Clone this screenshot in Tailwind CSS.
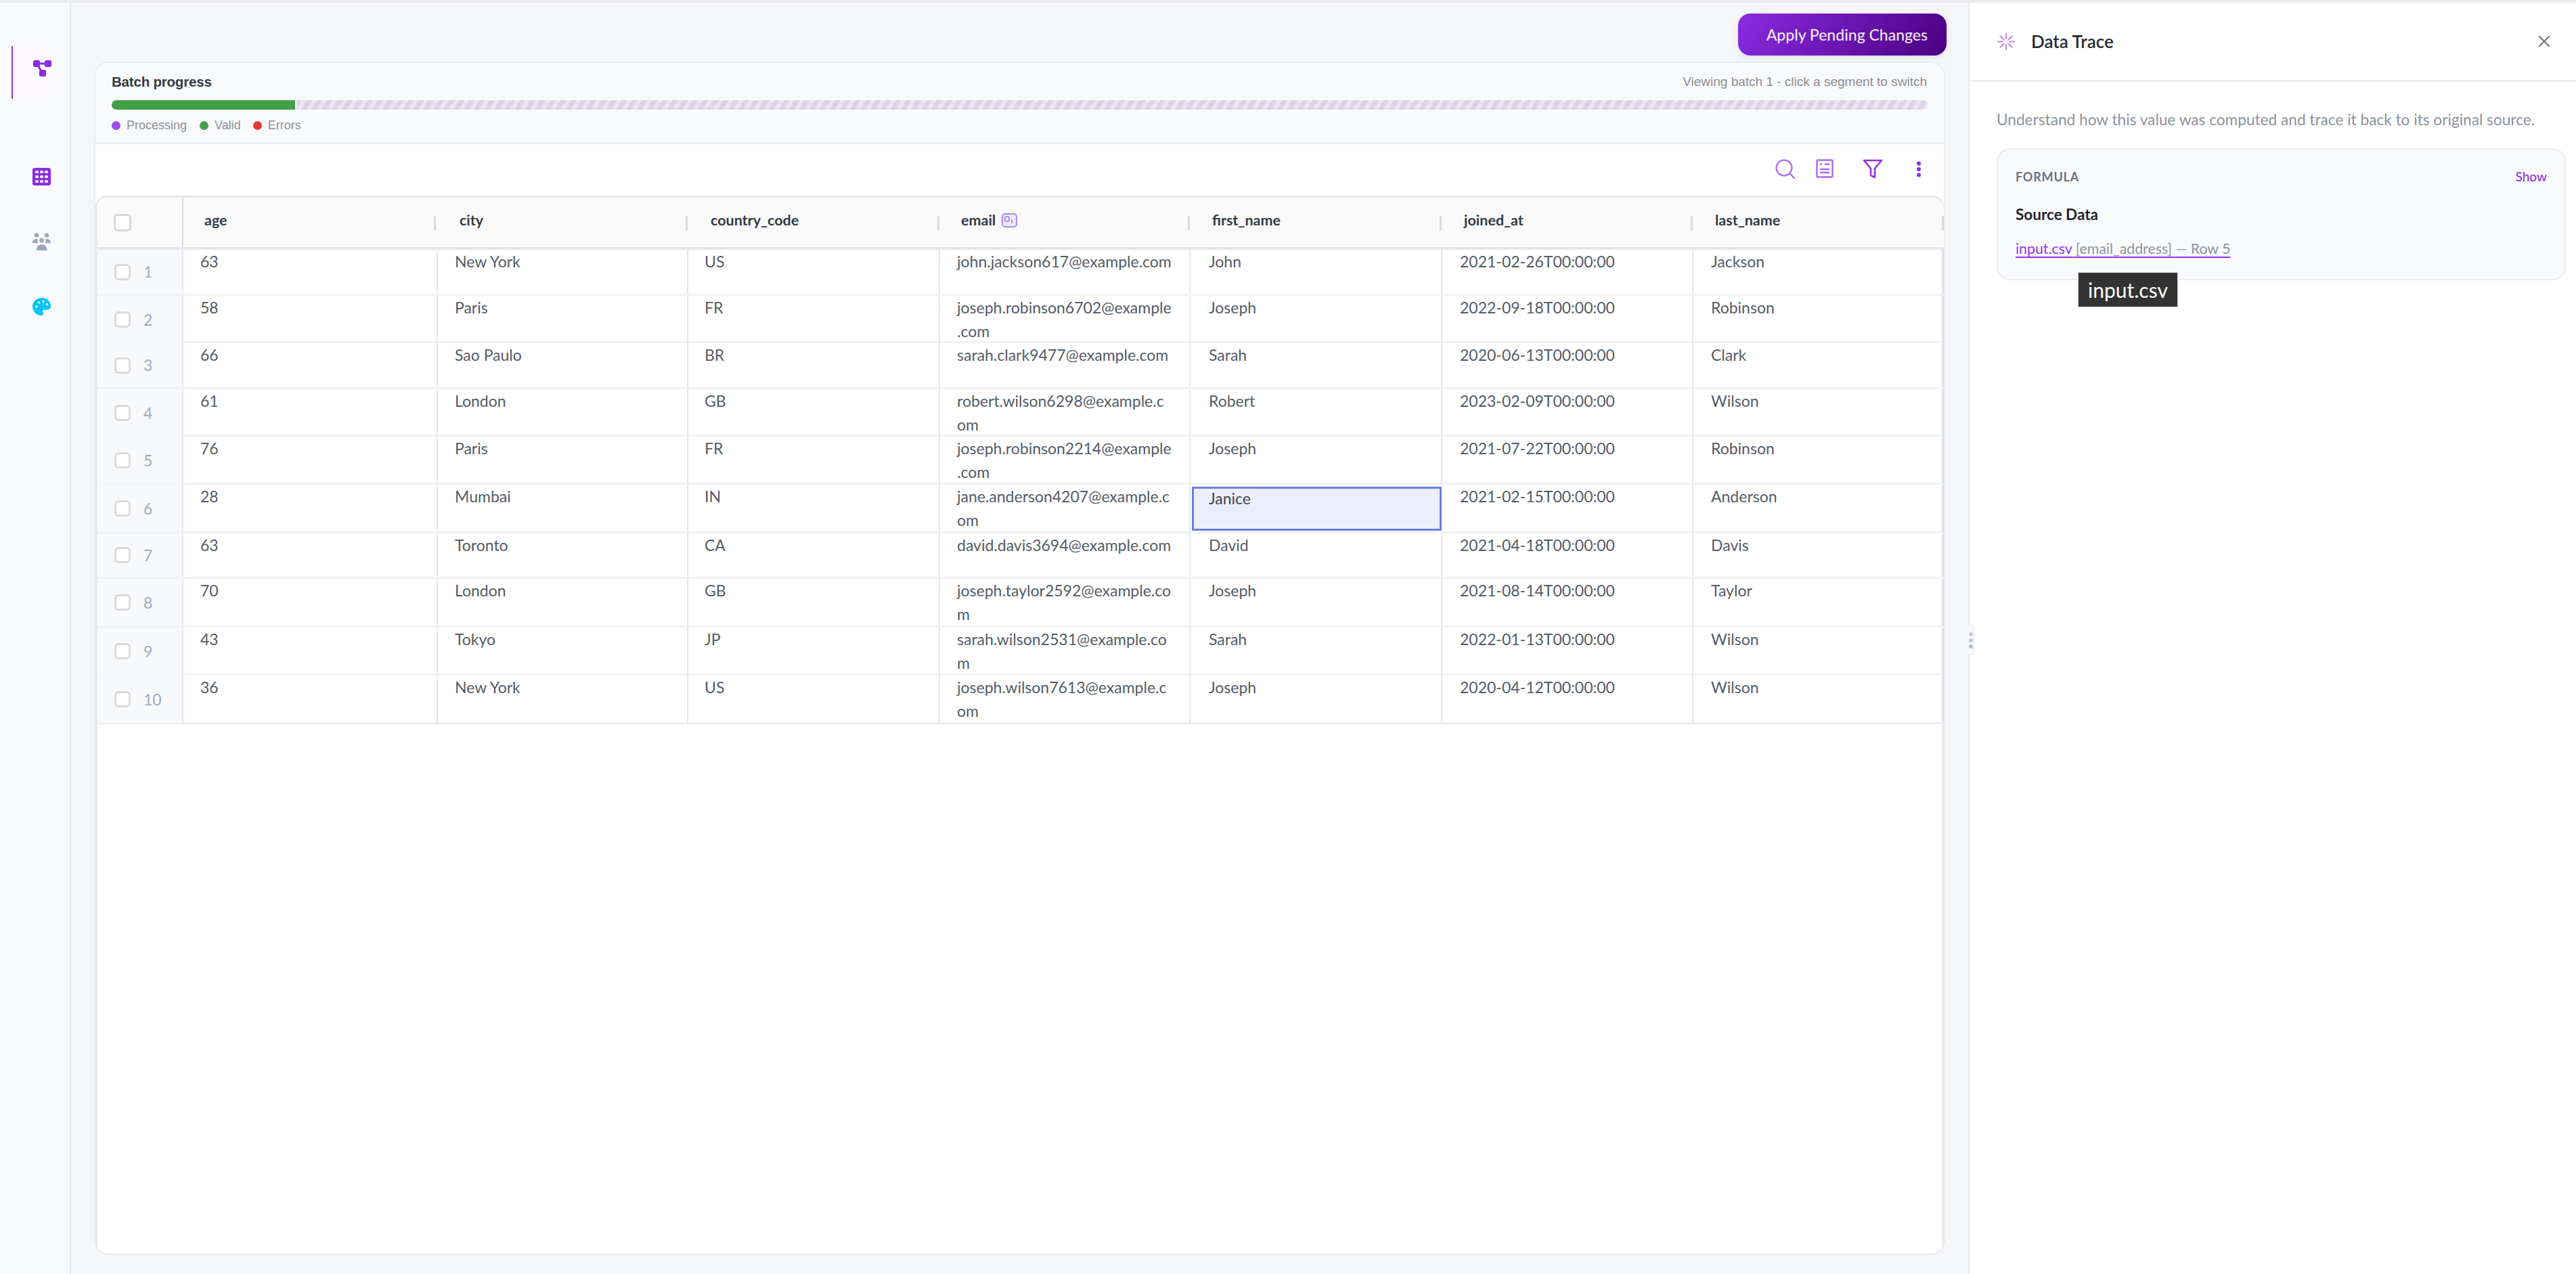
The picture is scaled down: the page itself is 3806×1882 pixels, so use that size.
<!DOCTYPE html>
<html lang="en">
<head>
<meta charset="utf-8">
<title>Data Trace</title>
<script src="https://cdn.jsdelivr.net/npm/@tailwindcss/browser@4"></script>
</head>
<body class="font-['Lato','Noto_Sans',sans-serif] text-[#555b66]">
<div class="flex h-[1882px] w-[3806px] flex-col overflow-hidden bg-[#f5f6f8]">
  <div class="h-[4px] shrink-0 bg-[#e9ebef]"></div>
  <div class="flex min-h-0 flex-1">

    <!-- Sidebar -->
    <aside class="flex w-[105px] shrink-0 flex-col border-r-2 border-[#e9ebef] bg-[#f9fafc] pt-[64px] pl-[17px]">
      <div class="flex h-[78px] w-[58px] items-center justify-end rounded-r-[20px] border-l-2 border-[#9333ea] bg-[#fbf9fe]">
        <svg class="mr-[-1px] mb-[12px] h-[24px] w-[27px] text-[#8a2be2]" viewBox="0 0 27 24" fill="none" stroke="currentColor">
          <g fill="currentColor" stroke="none">
            <rect x="0" y="0" width="10" height="10" rx="2.500"/><rect x="17" y="0" width="10" height="10" rx="2.500"/><rect x="9" y="14" width="10" height="10" rx="2.500"/>
          </g>
          <path d="M5 5h17M5 5l9 14" stroke-width="3"/>
        </svg>
      </div>
      <div class="mt-[102px] ml-[31px] flex flex-col gap-[70px]">
        <svg class="h-[26px] w-[27px] text-[#8a2be2]" viewBox="0 0 27 26">
          <rect width="27" height="26" rx="3.500" fill="currentColor"/>
          <g fill="#f3ecfc"><rect x="4" y="4" width="5" height="4" rx="1.500"/><rect x="11" y="4" width="5" height="4" rx="1.500"/><rect x="18" y="4" width="5" height="4" rx="1.500"/><rect x="4" y="11" width="5" height="4" rx="1.500"/><rect x="11" y="11" width="5" height="4" rx="1.500"/><rect x="18" y="11" width="5" height="4" rx="1.500"/><rect x="4" y="18" width="5" height="4" rx="1.500"/><rect x="11" y="18" width="5" height="4" rx="1.500"/><rect x="18" y="18" width="5" height="4" rx="1.500"/></g>
        </svg>
        <svg class="h-[26px] w-[27px] text-[#9aa8bc]" viewBox="0 0 27 26" fill="currentColor">
          <circle cx="6" cy="3.500" r="3.200"/><circle cx="21" cy="3.500" r="3.200"/><circle cx="13.500" cy="11" r="3.500"/>
          <path d="M0 15c0-4 2-6 5.500-6 1.200 0 2 .3 2.600.7-.6 1-.9 2-.7 3.300.1.800.5 1.500 1 2H0zM27 15c0-4-2-6-5.500-6-1.200 0-2 .3-2.600.7.600 1 .9 2 .7 3.300-.1.800-.5 1.500-1 2H27zM5.500 26c0-5.500 3-9 8-9s8 3.500 8 9H5.500z"/>
        </svg>
        <svg class="h-[26px] w-[27px] text-[#06c5f7]" viewBox="0 0 27 26">
          <path fill="currentColor" d="M14 0C6 0 0 6 0 13s6 13 13 13c2 0 3-1.200 3-2.800 0-.8-.3-1.500-.8-2.100-.5-.6-.6-1.500-.2-2.200.4-.8 1-1.200 2-1.200h3.500c4 0 6.500-2.500 6.500-5.700C27 5.500 21 0 14 0z"/>
          <g fill="#d9f6fe"><circle cx="6" cy="13" r="1.800"/><circle cx="9.500" cy="7" r="1.800"/><circle cx="16" cy="5.500" r="1.800"/><circle cx="21.500" cy="9.500" r="1.800"/></g>
        </svg>
      </div>
    </aside>

    <!-- Main -->
    <main class="relative min-w-0 flex-1 px-[34px] pt-[16px]">
      <div class="flex h-[62px] justify-end">
        <button class="mr-[-2px] flex h-[62px] w-[308px] items-center justify-end rounded-[18px] bg-linear-[120deg,#8a2be2,#4b0082] pr-[28px] text-[23px] font-medium text-white/90 shadow-[0_2px_8px_rgba(0,0,0,0.10)]">Apply Pending Changes</button>
      </div>

      <section class="mt-[9px] flex h-[1763px] flex-col overflow-hidden rounded-[22px] border-2 border-[#e9ebef] bg-white">
        <div class="h-[120px] shrink-0 border-b-[3px] border-[#eceef2] bg-[#f9fafc] px-[24px] font-['Liberation_Sans',sans-serif]">
          <div class="flex h-[55px] items-start justify-between pt-[15px]">
            <span class="text-[20.500px] leading-[26px] font-bold tracking-[-0.2px] text-[#333a45]">Batch progress</span>
            <span class="pr-[1px] text-[19px] leading-[26px] text-[#8b8d92]">Viewing batch 1 - click a segment to switch</span>
          </div>
          <div class="flex h-[14px] gap-[2px] overflow-hidden rounded-full">
            <div class="w-[271px] bg-[#43a047]"></div>
            <div class="flex-1 bg-[repeating-linear-gradient(120deg,#dcd3e9_0,#dcd3e9_7px,#ebe6f2_7px,#ebe6f2_13px)]"></div>
          </div>
          <div class="mt-[11px] flex items-center text-[18px] leading-[24px] text-[#8b8f98]">
            <span class="h-[13px] w-[13px] rounded-full bg-[#9a4be6]"></span><span class="ml-[9px]">Processing</span>
            <span class="ml-[19px] h-[13px] w-[13px] rounded-full bg-[#43a047]"></span><span class="ml-[9px]">Valid</span>
            <span class="ml-[18px] h-[13px] w-[13px] rounded-full bg-[#e53935]"></span><span class="ml-[9px]">Errors</span>
          </div>
        </div>

        <div class="relative h-[76px] shrink-0">
          <svg class="absolute left-[2482px] top-[22px] h-[29px] w-[30px] text-[#b07cee]" viewBox="0 0 30 29" fill="none" stroke="currentColor" stroke-width="2.600"><circle cx="13" cy="13" r="11.500"/><path d="M22 22l6 6" stroke-linecap="round"/></svg>
          <svg class="absolute left-[2542px] top-[22px] h-[28px] w-[26px] text-[#a968ee]" viewBox="0 0 26 28" fill="none" stroke="currentColor" stroke-width="2.400"><rect x="1.500" y="1.500" width="23" height="25" rx="1.500"/><path d="M6 7.500h3M13 7.500h7M6 15h14M6 20h14" stroke-width="2.600"/></svg>
          <svg class="absolute left-[2611px] top-[22px] h-[29px] w-[30px] text-[#9333ea]" viewBox="0 0 30 29" fill="none" stroke="currentColor" stroke-width="2.600" stroke-linejoin="round"><path d="M2 2h26L18 14v13l-6-3V14z"/></svg>
          <svg class="absolute left-[2690px] top-[25px] h-[24px] w-[8px] text-[#8a2be2]" viewBox="0 0 8 24" fill="currentColor"><circle cx="4" cy="3.500" r="3"/><circle cx="4" cy="12" r="3"/><circle cx="4" cy="20.500" r="3"/></svg>
        </div>

        <!-- Table -->
        <div class="flex min-h-0 flex-1 flex-col rounded-t-[16px] border-x-[3px] border-t-[3px] border-[#e8e9ec]">
          <div class="grid grid-cols-[127px_376px_370px_372px_370px_372px_371px_370px] text-[23px] leading-[35px]">

            <div class="col-span-8 grid h-[77px] grid-cols-subgrid rounded-t-[16px] border-b-[4px] border-[#e6e7ea] bg-[#fafafa] text-[21.500px] font-bold text-[#333a45]">
              <div class="flex items-center border-r-2 border-[#dedfe3] pl-[24px]"><span class="h-[26px] w-[26px] rounded-[6px] border-[3px] border-[#d8d8da] bg-white"></span></div>
              <div class="flex items-center justify-between pb-[6px] pl-[31px] pr-[3px]"><span>age</span><span class="mt-[8px] h-[22px] w-[3px] bg-[#dcdcde]"></span></div>
              <div class="flex items-center justify-between pb-[6px] pl-[32px] pr-[1px]"><span>city</span><span class="mt-[8px] h-[22px] w-[3px] bg-[#dcdcde]"></span></div>
              <div class="flex items-center justify-between pb-[6px] pl-[33px] pr-[1px]"><span>country_code</span><span class="mt-[8px] h-[22px] w-[3px] bg-[#dcdcde]"></span></div>
              <div class="flex items-center justify-between pb-[6px] pl-[31px] pr-[1px]"><span class="flex items-center gap-[9px]">email
                <svg class="h-[21px] w-[23px]" viewBox="0 0 23 21" fill="none"><rect x="1" y="1" width="21" height="19" rx="4" fill="#efe9fe" stroke="#a78bfa" stroke-width="2"/><rect x="5" y="5" width="6" height="7" rx="2" stroke="#8b7bd8" stroke-width="1.500"/><path d="M15 9v6" stroke="#8b7bd8" stroke-width="1.500"/></svg></span><span class="mt-[8px] h-[22px] w-[3px] bg-[#dcdcde]"></span></div>
              <div class="flex items-center justify-between pb-[6px] pl-[32px] pr-[1px]"><span>first_name</span><span class="mt-[8px] h-[22px] w-[3px] bg-[#dcdcde]"></span></div>
              <div class="flex items-center justify-between pb-[6px] pl-[32px] pr-[1px]"><span>joined_at</span><span class="mt-[8px] h-[22px] w-[3px] bg-[#dcdcde]"></span></div>
              <div class="flex items-center justify-between pb-[6px] pl-[32px] pr-[0px]"><span>last_name</span><span class="mt-[8px] h-[22px] w-[3px] bg-[#dcdcde]"></span></div>
            </div>

            <div class="col-span-8 grid h-[68px] grid-cols-subgrid border-b-[3px] border-[#f1f2f4]">
              <div class="flex items-center gap-[19px] border-r-2 border-[#e3e7f0] bg-[#f8f9fb] pl-[25px] text-[#9eaabd]"><span class="h-[24px] w-[24px] rounded-[6px] border-[3px] border-[#dadadc] bg-white"></span><span>1</span></div>
              <div class="border-r-2 border-[#e3e7f0] pl-[25px]">63</div><div class="border-r-2 border-[#e3e7f0] pl-[25px]">New York</div><div class="border-r-2 border-[#e3e7f0] pl-[24px]">US</div><div class="border-r-2 border-[#e3e7f0] pl-[25px]">john.jackson617@example.com</div><div class="border-r-2 border-[#e3e7f0] pl-[27px]">John</div><div class="border-r-2 border-[#e3e7f0] pl-[26px]">2021-02-26T00:00:00</div><div class="border-r-2 border-[#d5dce8] pl-[26px]">Jackson</div>
            </div>
            <div class="col-span-8 grid h-[70px] grid-cols-subgrid border-b-[3px] border-[#f1f2f4]">
              <div class="flex items-center gap-[19px] border-r-2 border-[#e3e7f0] bg-[#f8f9fb] pl-[25px] text-[#9eaabd]"><span class="h-[24px] w-[24px] rounded-[6px] border-[3px] border-[#dadadc] bg-white"></span><span>2</span></div>
              <div class="border-r-2 border-[#e3e7f0] pl-[25px]">58</div><div class="border-r-2 border-[#e3e7f0] pl-[25px]">Paris</div><div class="border-r-2 border-[#e3e7f0] pl-[24px]">FR</div><div class="border-r-2 border-[#e3e7f0] pl-[25px]">joseph.robinson6702@example<br>.com</div><div class="border-r-2 border-[#e3e7f0] pl-[27px]">Joseph</div><div class="border-r-2 border-[#e3e7f0] pl-[26px]">2022-09-18T00:00:00</div><div class="border-r-2 border-[#d5dce8] pl-[26px]">Robinson</div>
            </div>
            <div class="col-span-8 grid h-[68px] grid-cols-subgrid border-b-[3px] border-[#f1f2f4]">
              <div class="flex items-center gap-[19px] border-r-2 border-[#e3e7f0] bg-[#f8f9fb] pl-[25px] text-[#9eaabd]"><span class="h-[24px] w-[24px] rounded-[6px] border-[3px] border-[#dadadc] bg-white"></span><span>3</span></div>
              <div class="border-r-2 border-[#e3e7f0] pl-[25px]">66</div><div class="border-r-2 border-[#e3e7f0] pl-[25px]">Sao Paulo</div><div class="border-r-2 border-[#e3e7f0] pl-[24px]">BR</div><div class="border-r-2 border-[#e3e7f0] pl-[25px]">sarah.clark9477@example.com</div><div class="border-r-2 border-[#e3e7f0] pl-[27px]">Sarah</div><div class="border-r-2 border-[#e3e7f0] pl-[26px]">2020-06-13T00:00:00</div><div class="border-r-2 border-[#d5dce8] pl-[26px]">Clark</div>
            </div>
            <div class="col-span-8 grid h-[70px] grid-cols-subgrid border-b-[3px] border-[#f1f2f4]">
              <div class="flex items-center gap-[19px] border-r-2 border-[#e3e7f0] bg-[#f8f9fb] pl-[25px] text-[#9eaabd]"><span class="h-[24px] w-[24px] rounded-[6px] border-[3px] border-[#dadadc] bg-white"></span><span>4</span></div>
              <div class="border-r-2 border-[#e3e7f0] pl-[25px]">61</div><div class="border-r-2 border-[#e3e7f0] pl-[25px]">London</div><div class="border-r-2 border-[#e3e7f0] pl-[24px]">GB</div><div class="border-r-2 border-[#e3e7f0] pl-[25px]">robert.wilson6298@example.c<br>om</div><div class="border-r-2 border-[#e3e7f0] pl-[27px]">Robert</div><div class="border-r-2 border-[#e3e7f0] pl-[26px]">2023-02-09T00:00:00</div><div class="border-r-2 border-[#d5dce8] pl-[26px]">Wilson</div>
            </div>
            <div class="col-span-8 grid h-[71px] grid-cols-subgrid border-b-[3px] border-[#f1f2f4]">
              <div class="flex items-center gap-[19px] border-r-2 border-[#e3e7f0] bg-[#f8f9fb] pl-[25px] text-[#9eaabd]"><span class="h-[24px] w-[24px] rounded-[6px] border-[3px] border-[#dadadc] bg-white"></span><span>5</span></div>
              <div class="border-r-2 border-[#e3e7f0] pl-[25px]">76</div><div class="border-r-2 border-[#e3e7f0] pl-[25px]">Paris</div><div class="border-r-2 border-[#e3e7f0] pl-[24px]">FR</div><div class="border-r-2 border-[#e3e7f0] pl-[25px]">joseph.robinson2214@example<br>.com</div><div class="border-r-2 border-[#e3e7f0] pl-[27px]">Joseph</div><div class="border-r-2 border-[#e3e7f0] pl-[26px]">2021-07-22T00:00:00</div><div class="border-r-2 border-[#d5dce8] pl-[26px]">Robinson</div>
            </div>
            <div class="col-span-8 grid h-[72px] grid-cols-subgrid border-b-[3px] border-[#f1f2f4]">
              <div class="flex items-center gap-[19px] border-r-2 border-[#e3e7f0] bg-[#f8f9fb] pl-[25px] text-[#9eaabd]"><span class="h-[24px] w-[24px] rounded-[6px] border-[3px] border-[#dadadc] bg-white"></span><span>6</span></div>
              <div class="border-r-2 border-[#e3e7f0] pl-[25px]">28</div><div class="border-r-2 border-[#e3e7f0] pl-[25px]">Mumbai</div><div class="border-r-2 border-[#e3e7f0] pl-[24px]">IN</div><div class="border-r-2 border-[#e3e7f0] pl-[25px]">jane.anderson4207@example.c<br>om</div><div class="mt-[3px] mr-[1px] mb-[2px] ml-[2px] h-[65px] border-[3px] border-[#6b7fdc] bg-[#eceffb] pl-[22px] leading-[29px] text-[#3f4550]">Janice</div><div class="border-r-2 border-[#e3e7f0] pl-[26px]">2021-02-15T00:00:00</div><div class="border-r-2 border-[#d5dce8] pl-[26px]">Anderson</div>
            </div>
            <div class="col-span-8 grid h-[67px] grid-cols-subgrid border-b-[3px] border-[#f1f2f4]">
              <div class="flex items-center gap-[19px] border-r-2 border-[#e3e7f0] bg-[#f8f9fb] pl-[25px] text-[#9eaabd]"><span class="h-[24px] w-[24px] rounded-[6px] border-[3px] border-[#dadadc] bg-white"></span><span>7</span></div>
              <div class="border-r-2 border-[#e3e7f0] pl-[25px]">63</div><div class="border-r-2 border-[#e3e7f0] pl-[25px]">Toronto</div><div class="border-r-2 border-[#e3e7f0] pl-[24px]">CA</div><div class="border-r-2 border-[#e3e7f0] pl-[25px]">david.davis3694@example.com</div><div class="border-r-2 border-[#e3e7f0] pl-[27px]">David</div><div class="border-r-2 border-[#e3e7f0] pl-[26px]">2021-04-18T00:00:00</div><div class="border-r-2 border-[#d5dce8] pl-[26px]">Davis</div>
            </div>
            <div class="col-span-8 grid h-[72px] grid-cols-subgrid border-b-[3px] border-[#f1f2f4]">
              <div class="flex items-center gap-[19px] border-r-2 border-[#e3e7f0] bg-[#f8f9fb] pl-[25px] text-[#9eaabd]"><span class="h-[24px] w-[24px] rounded-[6px] border-[3px] border-[#dadadc] bg-white"></span><span>8</span></div>
              <div class="border-r-2 border-[#e3e7f0] pl-[25px]">70</div><div class="border-r-2 border-[#e3e7f0] pl-[25px]">London</div><div class="border-r-2 border-[#e3e7f0] pl-[24px]">GB</div><div class="border-r-2 border-[#e3e7f0] pl-[25px]">joseph.taylor2592@example.co<br>m</div><div class="border-r-2 border-[#e3e7f0] pl-[27px]">Joseph</div><div class="border-r-2 border-[#e3e7f0] pl-[26px]">2021-08-14T00:00:00</div><div class="border-r-2 border-[#d5dce8] pl-[26px]">Taylor</div>
            </div>
            <div class="col-span-8 grid h-[71px] grid-cols-subgrid border-b-[3px] border-[#f1f2f4]">
              <div class="flex items-center gap-[19px] border-r-2 border-[#e3e7f0] bg-[#f8f9fb] pl-[25px] text-[#9eaabd]"><span class="h-[24px] w-[24px] rounded-[6px] border-[3px] border-[#dadadc] bg-white"></span><span>9</span></div>
              <div class="border-r-2 border-[#e3e7f0] pl-[25px]">43</div><div class="border-r-2 border-[#e3e7f0] pl-[25px]">Tokyo</div><div class="border-r-2 border-[#e3e7f0] pl-[24px]">JP</div><div class="border-r-2 border-[#e3e7f0] pl-[25px]">sarah.wilson2531@example.co<br>m</div><div class="border-r-2 border-[#e3e7f0] pl-[27px]">Sarah</div><div class="border-r-2 border-[#e3e7f0] pl-[26px]">2022-01-13T00:00:00</div><div class="border-r-2 border-[#d5dce8] pl-[26px]">Wilson</div>
            </div>
            <div class="col-span-8 grid h-[72px] grid-cols-subgrid border-b-[3px] border-[#eceef1]">
              <div class="flex items-center gap-[19px] border-r-2 border-[#e3e7f0] bg-[#f8f9fb] pl-[25px] text-[#9eaabd]"><span class="h-[24px] w-[24px] rounded-[6px] border-[3px] border-[#dadadc] bg-white"></span><span>10</span></div>
              <div class="border-r-2 border-[#e3e7f0] pl-[25px]">36</div><div class="border-r-2 border-[#e3e7f0] pl-[25px]">New York</div><div class="border-r-2 border-[#e3e7f0] pl-[24px]">US</div><div class="border-r-2 border-[#e3e7f0] pl-[25px]">joseph.wilson7613@example.c<br>om</div><div class="border-r-2 border-[#e3e7f0] pl-[27px]">Joseph</div><div class="border-r-2 border-[#e3e7f0] pl-[26px]">2020-04-12T00:00:00</div><div class="border-r-2 border-[#d5dce8] pl-[26px]">Wilson</div>
            </div>
          </div>
        </div>
      </section>
      <div class="absolute right-[-9px] top-[919px] z-10 flex h-[45px] w-[9px] flex-col items-start justify-center gap-[3px] rounded-r-[5px] border-y border-r border-[#e6e8ec] bg-[#f9fafc] pl-[1px]">
        <span class="h-[6px] w-[6px] rounded-full bg-[#c2c9d6]"></span><span class="h-[6px] w-[6px] rounded-full bg-[#c2c9d6]"></span><span class="h-[6px] w-[6px] rounded-full bg-[#b4bccb]"></span>
      </div>
    </main>

    <!-- Right panel -->
    <aside class="relative w-[898px] shrink-0 border-l-2 border-[#e9ebef] bg-white">
      <header class="flex h-[117px] items-center justify-between border-b-[3px] border-[#eceef2] pr-[38px] pl-[41px]">
        <div class="flex items-center gap-[24px]">
          <svg class="h-[25px] w-[26px] text-[#b983f0]" viewBox="0 0 26 25" fill="none" stroke="currentColor" stroke-width="2" stroke-linecap="round"><path d="M13 1v7M13 17v7M1 12.500h7M18 12.500h7M4.500 4.500l5 5M16.500 15.500l5 5M21.500 4.500l-5 5M9.500 15.500l-5 5"/></svg>
          <span class="text-[26px] leading-[32px] font-semibold text-[#262b33]">Data Trace</span>
        </div>
        <svg class="h-[18px] w-[18px] text-[#6b7280]" viewBox="0 0 18 18" fill="none" stroke="currentColor" stroke-width="2.200" stroke-linecap="round"><path d="M2 2l14 14M16 2L2 16"/></svg>
      </header>
      <div class="pt-[39px] pr-[15px] pl-[40px]">
        <p class="text-[22.650px] leading-[34px] text-[#8d939c]">Understand how this value was computed and trace it back to its original source.</p>
        <div class="mt-[25px] h-[195px] rounded-[20px] border-2 border-[#e9ebef] bg-[#f9fafc] px-[26px] pt-[26px]">
          <div class="flex items-center justify-between">
            <span class="text-[18px] leading-[28px] font-bold tracking-[0.8px] text-[#6b7280]">FORMULA</span>
            <span class="text-[19px] leading-[28px] font-medium text-[#9333ea]">Show</span>
          </div>
          <div class="mt-[26px] text-[22.500px] leading-[32px] font-bold text-[#1f2430]">Source Data</div>
          <div class="mt-[18px] text-[21.300px] leading-[32px] underline decoration-[#9333ea] decoration-2 underline-offset-[4px]"><span class="text-[#9333ea]">input.csv</span> <span class="text-[#8d939c]">[email_address] — Row 5</span></div>
        </div>
      </div>
      <div class="absolute top-[398px] left-[160px] flex h-[52px] w-[148px] items-center justify-center border border-[#d8d8d8] bg-[#333333] text-[30px] text-white">input.csv</div>
    </aside>
  </div>
</div>
</body>
</html>
